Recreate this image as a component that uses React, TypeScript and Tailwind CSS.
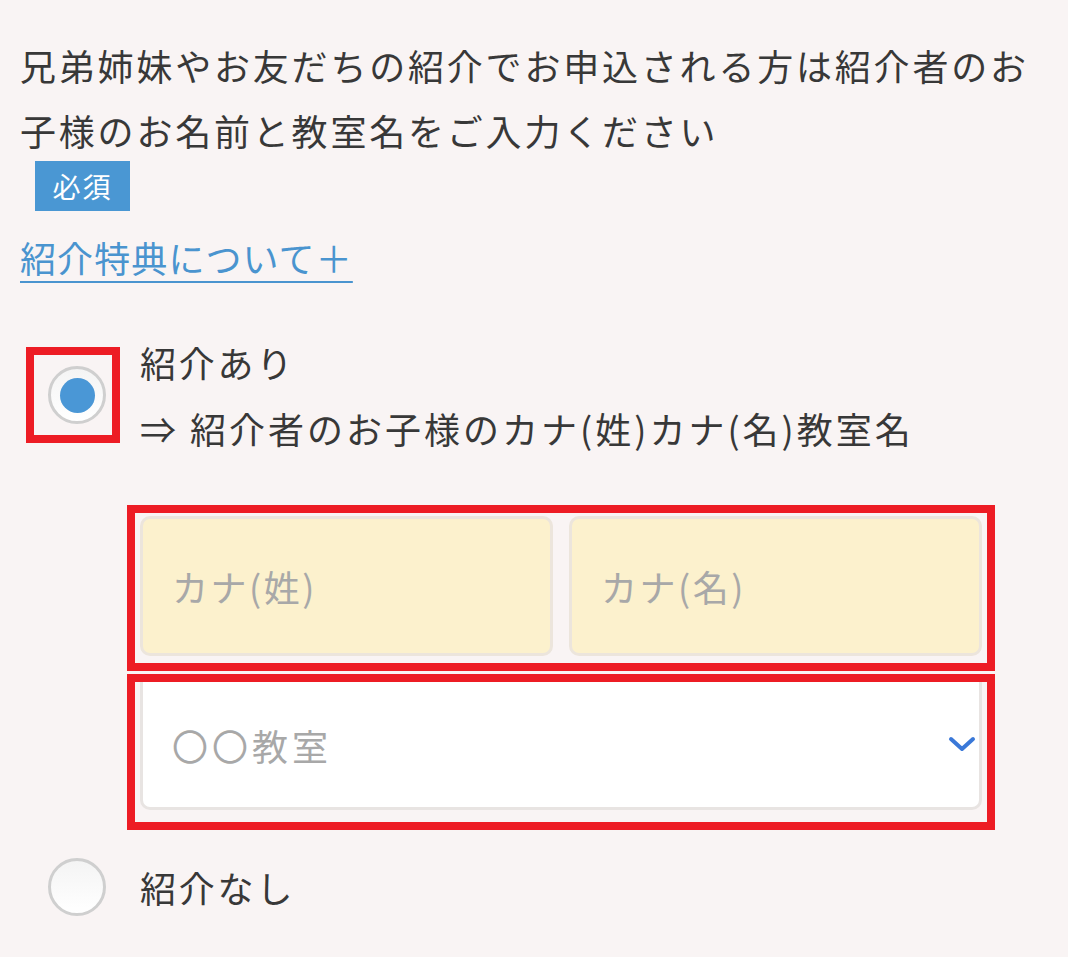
import React, { useState } from 'react';

const font = { fontFamily: '"Noto Sans CJK JP", "Noto Sans", sans-serif' };

const Radio: React.FC<{ checked: boolean; marked?: boolean }> = ({ checked, marked }) => (
  <div
    className={`w-[94px] h-[96px] shrink-0 flex items-center justify-center pl-[8px] border-[8px] ${
      marked ? 'border-[#ed1c24]' : 'border-transparent'
    }`}
  >
    <div className="w-[58px] h-[58px] shrink-0 rounded-full border-[3px] border-[#cfcfcf] bg-gradient-to-b from-[#f4f4f4] to-white flex items-center justify-center">
      {checked && <div className="w-[35px] h-[35px] rounded-full bg-[#4a97d6]" />}
    </div>
  </div>
);

const inputClass =
  'flex-1 min-w-0 h-[140px] rounded-[10px] bg-[#fcf1cd] border-[3px] border-[#ece5dc] px-[29px] text-[36px] tracking-[2.5px] placeholder:text-[#a8a8a8] outline-none';

const App: React.FC = () => {
  const [hasReferral, setHasReferral] = useState(true);

  return (
    <div className="min-h-[957px] bg-[#f9f4f4] text-[#383838] pl-[20px] pr-[20px] pt-[33px]" style={font}>
      <p className="text-[36px] leading-[65px] tracking-[2.8px]">
        兄弟姉妹やお友だちの紹介でお申込される方は紹介者のお
        <br />
        子様のお名前と教室名をご入力ください
      </p>
      <span className="inline-block ml-[15px] -mt-[2px] w-[95px] h-[50px] bg-[#4a97d3] text-white text-[28px] leading-[50px] text-center tracking-[2px]">
        必須
      </span>
      <div className="mt-[23px]">
        <a href="#" className="text-[#4a94cf] underline underline-offset-[8px] decoration-[2px] text-[36px] leading-[46px] tracking-[1.1px]">
          紹介特典について＋
        </a>
      </div>

      <div className="mt-[49px]">
        <label className="flex items-center ml-[6px]" onClick={() => setHasReferral(true)}>
          <Radio checked={hasReferral} marked />
          <div className="ml-[20px] text-[36px] leading-[66px] tracking-[2.8px]">
            <div>紹介あり</div>
            <div className="tracking-[3px]">⇒ 紹介者のお子様のカナ(姓)カナ(名)教室名</div>
          </div>
        </label>

        <div className="ml-[107px] mr-[53px] mt-[44px]">
          <div className="border-[8px] border-[#ed1c24] px-[5px] pt-[3px] pb-[7px] flex gap-[16px]">
            <input placeholder="カナ(姓)" className={inputClass} style={font} />
            <input placeholder="カナ(名)" className={inputClass} style={font} />
          </div>
          <div className="mt-[3px] border-[8px] border-[#ed1c24] px-[5px] pt-0 pb-[12px]">
            <div className="h-[128px] rounded-b-[10px] bg-white border-[3px] border-t-0 border-[#e8e4e2] flex items-center justify-between pl-[29px] pr-[3px]">
              <span className="text-[36px] tracking-[4px] text-[#a8a8a8]">〇〇教室</span>
              <svg width="28" height="18" viewBox="0 0 28 18" className="mt-[-2px]">
                <path d="M3 4 L14 14 L25 4" fill="none" stroke="#3a78d8" strokeWidth="4" strokeLinecap="round" strokeLinejoin="round" />
              </svg>
            </div>
          </div>
        </div>

        <label className="flex items-center ml-[6px] mt-[9px]" onClick={() => setHasReferral(false)}>
          <Radio checked={!hasReferral} />
          <div className="ml-[20px] text-[36px] leading-[66px] tracking-[2.8px]">紹介なし</div>
        </label>
      </div>
    </div>
  );
};

export default App;
